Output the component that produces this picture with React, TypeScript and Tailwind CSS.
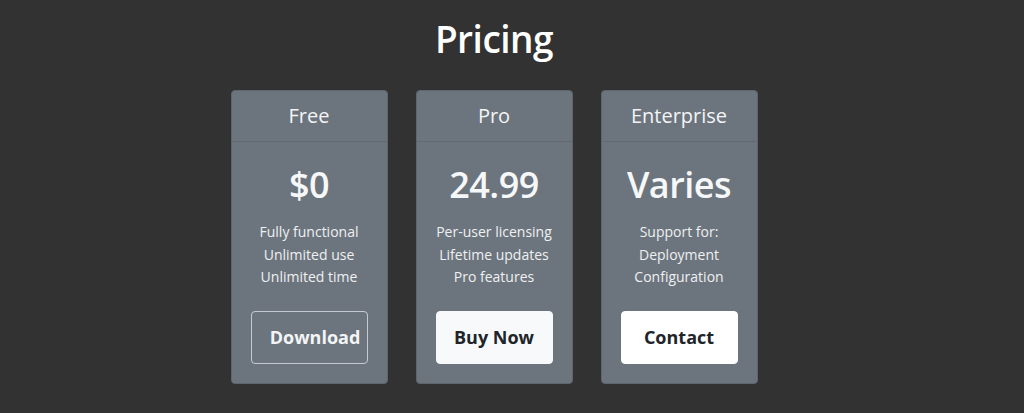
const plans = [
  {
    name: 'Free',
    price: '$0',
    features: ['Fully functional', 'Unlimited use', 'Unlimited time'],
    cta: 'Download',
    style: 'border border-[#c5cad0] text-[#f3f4f6] pl-[12px]',
  },
  {
    name: 'Pro',
    price: '24.99',
    features: ['Per-user licensing', 'Lifetime updates', 'Pro features'],
    cta: 'Buy Now',
    style: 'bg-[#f8f9fa] border border-[#f8f9fa] text-[#212529]',
  },
  {
    name: 'Enterprise',
    price: 'Varies',
    features: ['Support for:', 'Deployment', 'Configuration'],
    cta: 'Contact',
    style: 'bg-white border border-white text-[#212529]',
  },
];

export default function App() {
  return (
    <div
      className="h-[413px] w-full bg-[#323232] text-white"
      style={{ fontFamily: '"Open Sans", "Noto Sans", sans-serif' }}
    >
      <div className="flex flex-col items-center pr-[36px]">
        {/* Title */}
        <h1 className="mt-[16px] text-[37px] font-semibold leading-[46px] tracking-[-0.5px]">Pricing</h1>

        {/* Cards */}
        <div className="mt-[28px] flex gap-[28px]">
          {plans.map(plan => (
            <div key={plan.name} className="flex w-[157px] flex-col rounded-[4px] border border-[#5e656c] bg-[#6c757d]">
              <div className="flex h-[51px] items-center justify-center border-b border-[#62696f] text-[20px] text-[#f3f4f6]">
                {plan.name}
              </div>
              <div className="flex flex-col items-center px-[19px] pb-[19px] pt-[19px]">
                <div className="text-[36px] font-semibold leading-[48px] tracking-[-0.5px] text-[#f6f7f8]">{plan.price}</div>
                <ul className="mt-[12px] text-center text-[14px] leading-[22.5px] text-[#eef0f2]">
                  {plan.features.map(f => (
                    <li key={f}>{f}</li>
                  ))}
                </ul>
                <button className={`mt-[22px] flex h-[53px] w-full items-center justify-center rounded-[4px] text-[18px] font-bold ${plan.style}`}>
                  {plan.cta}
                </button>
              </div>
            </div>
          ))}
        </div>
      </div>
    </div>
  );
}
